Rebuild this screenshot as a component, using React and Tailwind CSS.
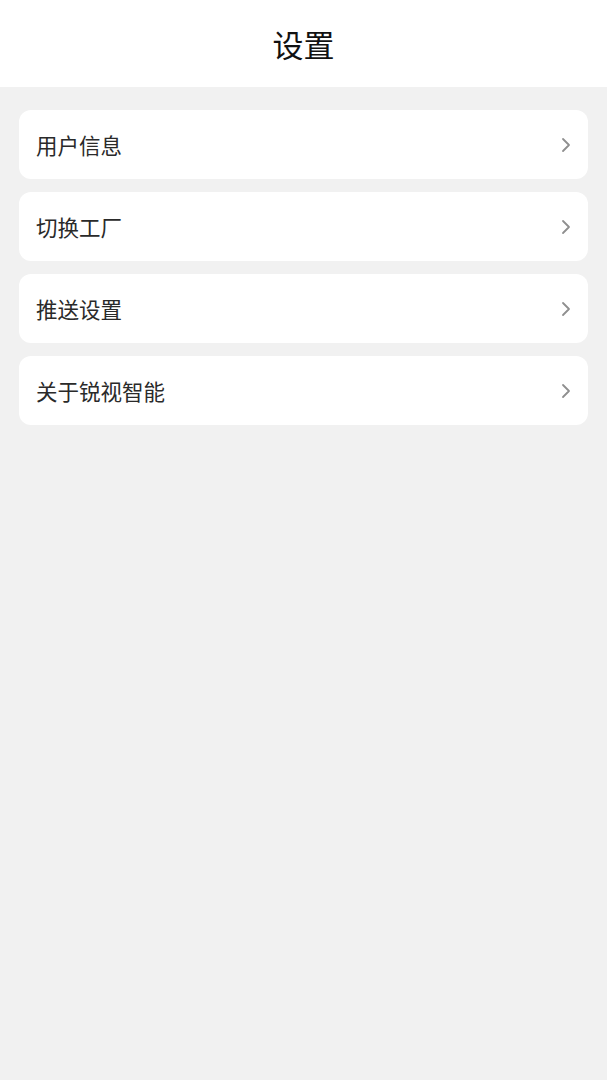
import React from "react";

const items = ["用户信息", "切换工厂", "推送设置", "关于锐视智能"];

function Chevron() {
  return (
    <svg width="10" height="16" viewBox="0 0 10 16" fill="none" className="shrink-0">
      <path d="M2 2l6 6-6 6" stroke="#8f8f8f" strokeWidth="1.8" strokeLinecap="round" strokeLinejoin="round" />
    </svg>
  );
}

export default function App() {
  return (
    <div
      className="min-h-[1080px] w-full bg-[#f1f1f1]"
      style={{ fontFamily: '"Noto Sans CJK SC", "Noto Sans", sans-serif' }}
    >
      {/* Header */}
      <header className="h-[87px] bg-white flex items-center justify-center">
        <h1 className="text-[31px] text-[#111] font-normal leading-none">设置</h1>
      </header>

      {/* Settings list */}
      <div className="flex flex-col gap-[13px] px-[19px] pt-[23px]">
        {items.map((label) => (
          <div
            key={label}
            className="h-[69px] bg-white rounded-[12px] flex items-center justify-between pl-[17px] pr-[17px]"
          >
            <span className="text-[21.5px] text-[#2a2a2a] leading-none">{label}</span>
            <Chevron />
          </div>
        ))}
      </div>
    </div>
  );
}
